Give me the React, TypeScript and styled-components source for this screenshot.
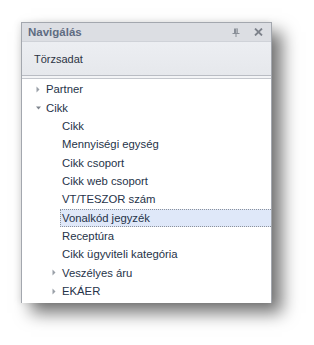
import React from "react";
import styled, { createGlobalStyle } from "styled-components";

const Global = createGlobalStyle`
  html, body { margin: 0; padding: 0; background: #ffffff; }
  body { font-family: "Liberation Sans", Arial, sans-serif; }
`;

const Stage = styled.div`
  width: 314px;
  height: 345px;
  padding: 22px 0 0 21px;
  box-sizing: border-box;
`;

const Panel = styled.div`
  width: 251px;
  height: 281px;
  box-sizing: border-box;
  border: 1px solid #a3a7ae;
  border-bottom: none;
  background: #ffffff;
  display: flex;
  flex-direction: column;
  box-shadow: 10px 10px 16px rgba(0, 0, 0, 0.55), -2px 0 6px rgba(0, 0, 0, 0.08);
`;

const TitleBar = styled.div`
  height: 18px;
  flex: none;
  background: #dcdee3;
  border-bottom: 1px solid #cfd2d8;
  display: flex;
  align-items: center;
  padding: 0 8px 0 6px;
`;

const Title = styled.div`
  flex: 1;
  font-size: 11.5px;
  font-weight: bold;
  color: #5f6c82;
`;

const TitleButtons = styled.div`
  display: flex;
  align-items: center;
  gap: 14px;
`;

const Toolbar = styled.div`
  height: 33px;
  flex: none;
  background: linear-gradient(#eceef2, #e6e8ec);
  border-bottom: 1px solid #b9bcc3;
  display: flex;
  align-items: center;
  padding-left: 12px;
  font-size: 11px;
  color: #2c3444;
`;

const Divider = styled.div`
  height: 2px;
  flex: none;
  background: #f3f4f6;
  border-bottom: 1px solid #c4c7cd;
`;

const Tree = styled.div`
  flex: 1;
  padding-top: 1px;
  display: flex;
  flex-direction: column;
`;

const Row = styled.div<{ $level: number }>`
  height: 18.36px;
  flex: none;
  display: flex;
  align-items: center;
  padding-left: ${(p) => 8 + p.$level * 16}px;
  font-size: 11.3px;
  color: #263349;
  white-space: nowrap;
`;

const Expander = styled.span`
  width: 16px;
  flex: none;
  display: flex;
  align-items: center;
  justify-content: center;
`;

const Label = styled.span<{ $selected?: boolean }>`
  flex: 1;
  align-self: stretch;
  display: flex;
  align-items: center;
  padding-left: 2px;
  margin-left: -2px;
  ${(p) =>
    p.$selected
      ? `background: #dfe8f9; border-top: 1px dotted #8c929c; border-bottom: 1px dotted #8c929c; border-left: 1px dotted #8c929c; padding-left: 1px;`
      : ``}
`;

const Collapsed = () => (
  <svg width="6" height="7" viewBox="0 0 6 7">
    <path d="M1.5 0.5 L4.5 3.5 L1.5 6.5 Z" fill="#9aa0a8" />
  </svg>
);

const Expanded = () => (
  <svg width="7" height="6" viewBox="0 0 7 6">
    <path d="M1 1.5 L6 1.5 L3.5 4.5 Z" fill="#7f858e" />
  </svg>
);

const PinIcon = () => (
  <svg width="8" height="9" viewBox="0 0 8 9">
    <path d="M2 0.5 H6 V5 H7.5 V6 H4.5 V9 H3.5 V6 H0.5 V5 H2 Z" fill="#8a8f98" />
    <rect x="4.2" y="0.5" width="1.2" height="4.5" fill="#b7bbc1" />
  </svg>
);

const CloseIcon = () => (
  <svg width="9" height="8" viewBox="0 0 9 8">
    <path d="M1 0.5 L8 7.5 M8 0.5 L1 7.5" stroke="#7d828b" strokeWidth="1.8" />
  </svg>
);

type Node = { label: string; level: number; exp?: "open" | "closed"; selected?: boolean };

const nodes: Node[] = [
  { label: "Partner", level: 0, exp: "closed" },
  { label: "Cikk", level: 0, exp: "open" },
  { label: "Cikk", level: 1 },
  { label: "Mennyiségi egység", level: 1 },
  { label: "Cikk csoport", level: 1 },
  { label: "Cikk web csoport", level: 1 },
  { label: "VT/TESZOR szám", level: 1 },
  { label: "Vonalkód jegyzék", level: 1, selected: true },
  { label: "Receptúra", level: 1 },
  { label: "Cikk ügyviteli kategória", level: 1 },
  { label: "Veszélyes áru", level: 1, exp: "closed" },
  { label: "EKÁER", level: 1, exp: "closed" },
];

export default function App() {
  return (
    <>
      <Global />
      <Stage>
        <Panel>
          <TitleBar>
            <Title>Navigálás</Title>
            <TitleButtons>
              <PinIcon />
              <CloseIcon />
            </TitleButtons>
          </TitleBar>
          <Toolbar>Törzsadat</Toolbar>
          <Divider />
          <Tree>
            {nodes.map((n, i) => (
              <Row key={i} $level={n.level}>
                <Expander>
                  {n.exp === "closed" && <Collapsed />}
                  {n.exp === "open" && <Expanded />}
                </Expander>
                <Label $selected={n.selected}>{n.label}</Label>
              </Row>
            ))}
          </Tree>
        </Panel>
      </Stage>
    </>
  );
}
